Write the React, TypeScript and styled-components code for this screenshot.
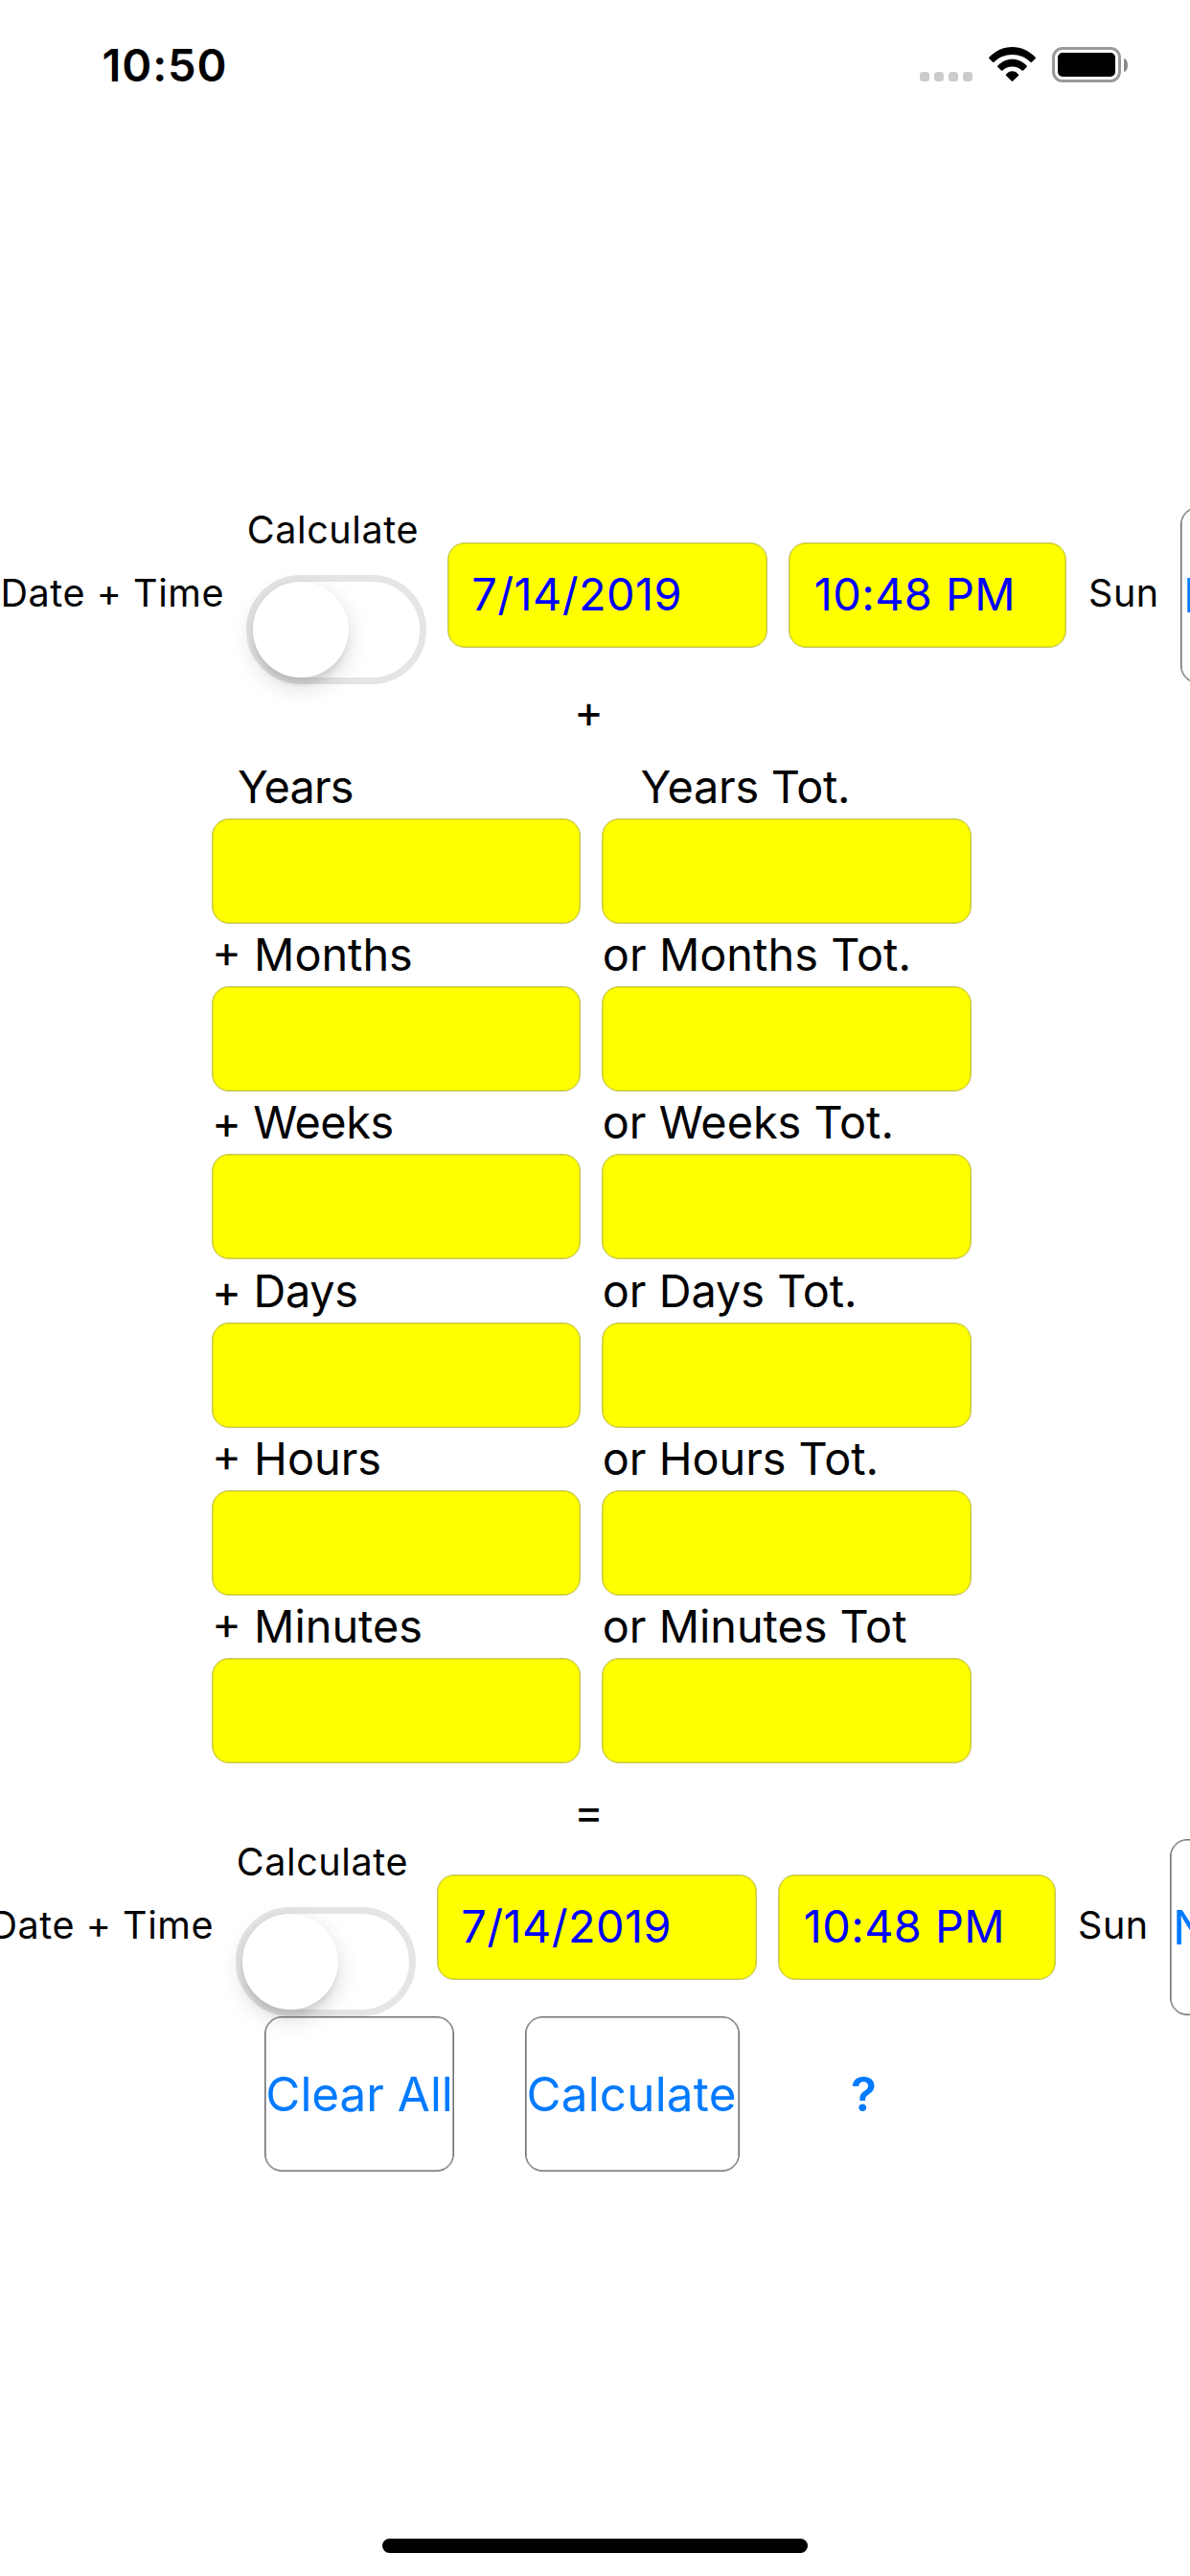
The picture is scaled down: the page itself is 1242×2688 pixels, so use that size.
import React from "react";
import styled, { createGlobalStyle } from "styled-components";

const GlobalStyle = createGlobalStyle`
  body {
    margin: 0;
    background: #fff;
  }
  *, *::before, *::after {
    box-sizing: border-box;
  }
`;

const Screen = styled.main`
  display: flex;
  flex-direction: column;
  width: 1242px;
  height: 2688px;
  overflow: hidden;
  background: #fff;
  color: #000;
  font-family: Inter, Roboto, sans-serif;
  white-space: pre;
`;

/* Status bar */

const StatusBar = styled.header`
  display: flex;
  flex: none;
  align-items: flex-start;
  justify-content: space-between;
  height: 132px;
  padding: 44px 65px 0 106.5px;
`;

const Clock = styled.time`
  font-size: 47px;
  font-weight: 600;
  line-height: 48px;
  letter-spacing: 0.9px;
`;

const StatusIcons = styled.div`
  display: flex;
  align-items: flex-start;
  padding-top: 5px;
`;

const SignalDots = styled.div`
  display: flex;
  gap: 5px;
  margin: 26px 17px 0 0;
`;

const SignalDot = styled.span`
  width: 10px;
  height: 10px;
  border-radius: 3.5px;
  background: #cbcbcb;
`;

const WifiSvg = styled.svg`
  display: block;
  width: 49px;
  height: 36px;
  margin-right: 17px;
`;

const Battery = styled.div`
  width: 72px;
  height: 37px;
  padding: 3px;
  border: 3px solid #999;
  border-radius: 11px;
`;

const BatteryCharge = styled.div`
  width: 60px;
  height: 25px;
  border-radius: 5px;
  background: #000;
`;

const BatteryTip = styled.div`
  width: 4px;
  height: 14px;
  margin: 12px 0 0 3px;
  border-radius: 0 4px 4px 0 / 0 7px 7px 0;
  background: #8a8a8a;
`;

/* Shared controls */

const Field = styled.div<{ $width: number; $inset?: number }>`
  display: flex;
  flex: none;
  align-items: center;
  width: ${(p) => p.$width}px;
  height: 110px;
  padding: 0 0 2px ${(p) => p.$inset ?? 24.3}px;
  border: 1px solid #c6c66a;
  border-radius: 18px;
  background: #ff0;
  box-shadow: inset 0 0 0 0.5px rgba(0, 0, 0, 0.2);
  color: #00f;
  font-size: 46.8px;
  letter-spacing: 0.45px;
`;

const OutlineButton = styled.button<{ $width: number; $height: number; $inset?: number; $spacing?: number }>`
  display: flex;
  flex: none;
  align-items: center;
  width: ${(p) => p.$width}px;
  height: ${(p) => p.$height}px;
  padding: 0 0 0 ${(p) => p.$inset ?? 0}px;
  border: 1px solid #707070;
  border-radius: 18px;
  background: transparent;
  box-shadow: inset 0 0 0 0.6px #707070;
  color: #007aff;
  font: 400 49.4px Inter, Roboto, sans-serif;
  letter-spacing: ${(p) => p.$spacing ?? 0}px;
`;

const Operator = styled.div<{ $before: number; $after: number }>`
  flex: none;
  height: 48px;
  margin: ${(p) => p.$before}px 0 ${(p) => p.$after}px;
  padding-left: 599px;
  font-size: 46.8px;
  font-weight: 400;
  line-height: 48px;
`;

/* Date rows */

const DateRow = styled.section<{ $shift?: number }>`
  display: flex;
  flex: none;
  align-items: center;
  height: 184px;
  margin-left: ${(p) => p.$shift ?? 0}px;
`;

const RowLabel = styled.span<{ $width: number }>`
  flex: none;
  width: ${(p) => p.$width}px;
  padding: 0 0 4px 0.5px;
  font-size: 39.5px;
  letter-spacing: 0.57px;
`;

const SwitchColumn = styled.div`
  display: flex;
  flex: none;
  flex-direction: column;
  align-self: flex-start;
  width: 188px;
  margin-right: 22px;
`;

const SwitchLabel = styled.span`
  height: 48px;
  margin-bottom: 23px;
  padding-left: 0.8px;
  font-size: 39.5px;
  line-height: 48px;
  letter-spacing: 0.6px;
`;

const Switch = styled.div`
  width: 188px;
  height: 114px;
  border: 7px solid #e5e5e5;
  border-radius: 57px;
`;

const Knob = styled.div`
  width: 100px;
  height: 100px;
  border-radius: 50%;
  background: #fff;
  box-shadow: 0 9px 24px rgba(0, 0, 0, 0.15), 0 9px 6px -2px rgba(0, 0, 0, 0.08),
    0 0 2px rgba(0, 0, 0, 0.06);
`;

/* Duration grid */

const DurationGrid = styled.section`
  display: grid;
  flex: none;
  grid-template-columns: 385px 386px;
  grid-auto-rows: 175.2px;
  column-gap: 22px;
  padding-left: 221px;
`;

const DurationCell = styled.div`
  display: flex;
  flex-direction: column;
`;

const DurationLabel = styled.label<{ $indent: number; $spacing: number }>`
  height: 64px;
  padding-left: ${(p) => p.$indent}px;
  font-size: 46.8px;
  line-height: 63px;
  letter-spacing: ${(p) => p.$spacing}px;
`;

/* Footer */

const Actions = styled.footer`
  display: flex;
  align-items: center;
  margin-top: 1px;
  padding-left: 276px;
  gap: 74px;
`;

const HelpButton = styled.button`
  margin-left: 42.5px;
  padding: 0;
  border: 0;
  background: none;
  color: #007aff;
  font: 600 49.4px Inter, Roboto, sans-serif;
`;

const HomeIndicator = styled.div`
  flex: none;
  align-self: center;
  width: 444px;
  height: 15px;
  margin: auto 0 24px;
  border-radius: 7.5px;
  background: #000;
`;

const FormBody = styled.div`
  display: flex;
  flex-direction: column;
  margin-top: 397px;
`;

const DateFields = styled.div`
  display: flex;
  flex: none;
  gap: 22px;
  margin-right: 22.5px;
`;

const durations = [
  { text: "Years", indent: 27, spacing: -0.75 },
  { text: "Years Tot.", indent: 40.6, spacing: -0.24 },
  { text: "+ Months", indent: 0, spacing: 0 },
  { text: "or Months Tot.", indent: 0.8, spacing: 0.08 },
  { text: "+ Weeks", indent: 0, spacing: -0.45 },
  { text: "or Weeks Tot.", indent: 0.8, spacing: 0 },
  { text: "+ Days", indent: 0, spacing: -0.3 },
  { text: "or Days Tot.", indent: 0.8, spacing: 0 },
  { text: "+ Hours", indent: 0, spacing: 0 },
  { text: "or Hours Tot.", indent: 0.8, spacing: 0 },
  { text: "+ Minutes", indent: 0, spacing: 0 },
  { text: "or Minutes Tot", indent: 0.8, spacing: 0 },
];

function WifiIcon() {
  return (
    <WifiSvg viewBox="0 0 49 36">
      <path d="M.5 10.6C7 4 15.500 0 24.500 0S42 4 48.500 10.600Q49.300 11.400 48.500 12.200L45 15.700Q44.200 16.400 43.400 15.700C38.500 10.800 31.800 8 24.500 8S10.500 10.800 5.600 15.700Q4.800 16.400 4 15.700L.5 12.200Q-.3 11.400 .5 10.600Z" />
      <path d="M9.400 19.500C13.500 15.300 18.800 12.800 24.500 12.800S35.500 15.300 39.600 19.500Q40.300 20.200 39.600 20.900L36 24.500Q35.300 25.200 34.600 24.500C31.800 21.900 28.400 20.400 24.500 20.400S17.200 21.900 14.400 24.500Q13.700 25.200 13 24.500L9.400 20.900Q8.700 20.200 9.400 19.500Z" />
      <path d="M18.100 28.600C19.800 26.400 22 25.200 24.500 25.200S29.200 26.400 30.900 28.600Q31.500 29.300 30.900 29.900L25.200 35.600Q24.500 36.200 23.800 35.600L18.100 29.900Q17.500 29.300 18.100 28.600Z" />
    </WifiSvg>
  );
}

function DateTimeRow({ shift }: { shift?: number }) {
  return (
    <DateRow $shift={shift}>
      <RowLabel $width={257}>Date + Time</RowLabel>
      <SwitchColumn>
        <SwitchLabel>Calculate</SwitchLabel>
        <Switch role="switch" aria-checked={false}>
          <Knob />
        </Switch>
      </SwitchColumn>
      <DateFields>
        <Field $width={334}>7/14/2019</Field>
        <Field $width={290} $inset={25.8}>10:48 PM</Field>
      </DateFields>
      <RowLabel $width={96.5}>Sun</RowLabel>
      <OutlineButton $width={120} $height={184} $inset={2}>
        Now
      </OutlineButton>
    </DateRow>
  );
}

function Form() {
  return (
    <FormBody>
      <DateTimeRow />
      <Operator $before={5} $after={24}>+</Operator>
      <DurationGrid>
        {durations.map((d, i) => (
          <DurationCell key={d.text}>
            <DurationLabel $indent={d.indent} $spacing={d.spacing}>
              {d.text}
            </DurationLabel>
            <Field $width={i % 2 ? 386 : 385} />
          </DurationCell>
        ))}
      </DurationGrid>
      <Operator $before={24.8} $after={5}>=</Operator>
      <DateTimeRow shift={-11} />
      <Actions>
        <OutlineButton $width={197.5} $height={162} $inset={0.3}>
          Clear All
        </OutlineButton>
        <OutlineButton $width={224} $height={162} $inset={1} $spacing={0.2}>
          Calculate
        </OutlineButton>
        <HelpButton>?</HelpButton>
      </Actions>
    </FormBody>
  );
}

export default function App() {
  return (
    <>
      <GlobalStyle />
      <Screen>
        <StatusBar>
          <Clock>10:50</Clock>
          <StatusIcons>
            <SignalDots>
              <SignalDot />
              <SignalDot />
              <SignalDot />
              <SignalDot />
            </SignalDots>
            <WifiIcon />
            <Battery>
              <BatteryCharge />
            </Battery>
            <BatteryTip />
          </StatusIcons>
        </StatusBar>
        <Form />
        <HomeIndicator />
      </Screen>
    </>
  );
}
